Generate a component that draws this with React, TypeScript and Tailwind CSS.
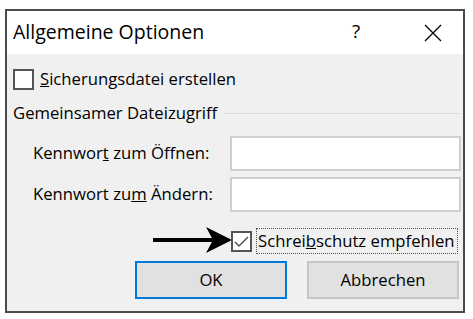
import React from 'react';

const font = { fontFamily: '"Open Sans", "Noto Sans", Arial, sans-serif' };

const Arrow: React.FC = () => (
  <svg width="80" height="30" viewBox="0 0 80 30" className="shrink-0">
    <rect x="1" y="12" width="60" height="4" fill="#000" />
    <path d="M54 1 L80 14 L54 27 L61 14 Z" fill="#000" />
  </svg>
);

const App: React.FC = () => {
  return (
    <div className="w-[473px] h-[319px] bg-white pt-[9px] pl-[5px]" style={font}>
      <div className="w-[460px] h-[304px] border-2 border-[#4b4b4b] bg-[#f0f0f0] flex flex-col text-black">
        {/* Titelleiste */}
        <div className="h-[43px] bg-white flex items-center pl-[6px] shrink-0">
          <span className="text-[19.5px] leading-none flex-1 pb-[2px]">Allgemeine Optionen</span>
          <span className="text-[19px] leading-none w-[10px] mr-[62px] pb-[2px]">?</span>
          <svg width="18" height="18" viewBox="0 0 18 18" className="mr-[21px]">
            <path d="M1 1 L17 17 M17 1 L1 17" stroke="#000" strokeWidth="1.3" />
          </svg>
        </div>

        <div className="flex flex-col text-[16.7px] leading-none">
          <label className="flex items-center mt-[15px] ml-[6px] h-[21px]">
            <span className="w-[21px] h-[21px] border-2 border-[#555] bg-white shrink-0" />
            <span className="ml-[6px]">
              <u>S</u>icherungsdatei erstellen
            </span>
          </label>

          <div className="flex items-center mt-[13px] h-[20px] ml-[6px]">
            <span className="whitespace-nowrap">Gemeinsamer Dateizugriff</span>
            <div className="flex-1 h-px bg-[#dcdcdc] ml-[7px] mr-[3px]" />
          </div>

          <div className="grid grid-cols-[197px_231px] ml-[26px] mt-[13px] gap-y-[6px] items-center">
            <span>
              Kennwor<u>t</u> zum Öffnen:
            </span>
            <div className="h-[35px] border-2 border-[#cfcfcf] bg-white" />
            <span>
              Kennwort zu<u>m</u> Ändern:
            </span>
            <div className="h-[35px] border-2 border-[#cfcfcf] bg-white" />
          </div>

          <div className="flex items-center mt-[16px] ml-[145px] h-[26px]">
            <Arrow />
            <span className="w-[21px] h-[21px] border-2 border-[#555] bg-white shrink-0 -ml-[1px] flex items-center justify-center">
              <svg width="17" height="17" viewBox="0 0 17 17">
                <path d="M2 9 L6 13 L15 4" fill="none" stroke="#555" strokeWidth="1.5" />
              </svg>
            </span>
            <span className="ml-[4px] h-[26px] w-[202px] border border-dotted border-[#555] flex items-center pl-[1px] whitespace-nowrap">
              Schrei<u>b</u>schutz empfehlen
            </span>
          </div>

          <div className="flex mt-[7px] ml-[128px] gap-[20px]">
            <button className="w-[152px] h-[38px] bg-[#e1e1e1] border-2 border-[#0078d7]">
              OK
            </button>
            <button className="w-[152px] h-[38px] bg-[#e1e1e1] border-2 border-[#c6c6c6]">
              Abbrechen
            </button>
          </div>
        </div>
      </div>
    </div>
  );
};

export default App;
